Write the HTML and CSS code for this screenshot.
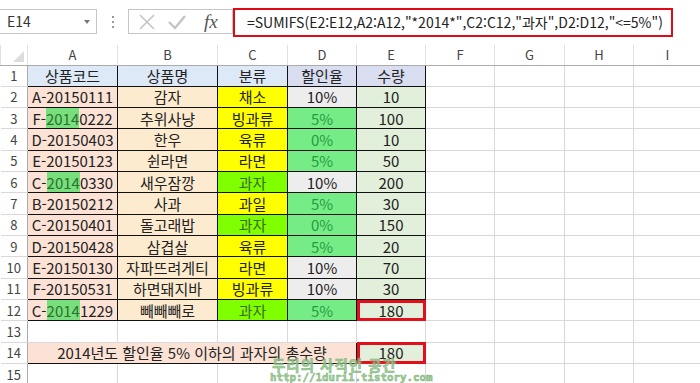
FILE: index.html
```html
<!DOCTYPE html>
<html lang="ko">
<head>
  <meta charset="UTF-8" />
  <title>SUMIFS</title>
  <link rel="stylesheet" href="styles.css">
</head>
<body>
  <div class="topbar">
    <div class="namebox">E14<span class="arrow"></span></div>
    <div class="dots"><span></span><span></span><span></span></div>
    <div class="fxbtns">
      <svg width="18" height="16" viewBox="0 0 18 16"><path d="M2 1 L16 15 M16 1 L2 15" stroke="#c4c4c4" stroke-width="1.6" fill="none"/></svg>
      <svg width="20" height="16" viewBox="0 0 20 16"><path d="M2 8 L8 14 L18 2" stroke="#c4c4c4" stroke-width="2.4" fill="none"/></svg>
      <span class="fx">fx</span>
    </div>
    <div class="formula">=SUMIFS(E2:E12,A2:A12,"*2014*",C2:C12,"과자",D2:D12,"&lt;=5%")</div>
  </div>

  <table class="sheet">
    <colgroup>
      <col style="width:27px"><col style="width:90px"><col style="width:100px"><col style="width:70px">
      <col style="width:69px"><col style="width:69px"><col style="width:69px"><col style="width:70px">
      <col style="width:69px"><col style="width:68px">
    </colgroup>
    <tr class="colhead">
      <th class="corner"><span class="tri"></span></th>
      <th>A</th><th>B</th><th>C</th><th>D</th><th>E</th><th>F</th><th>G</th><th>H</th><th>I</th>
    </tr>
    <tr>
      <td class="rn">1</td>
      <td class="d hd">상품코드</td><td class="d hd">상품명</td><td class="d hd">분류</td>
      <td class="d hd2">할인율</td><td class="d hd2">수량</td>
      <td></td><td></td><td></td><td></td>
    </tr>
    <tr>
      <td class="rn">2</td>
      <td class="d code">A-20150111</td><td class="d name">감자</td><td class="d cat">채소</td>
      <td class="d rate">10%</td><td class="d qty">10</td>
      <td></td><td></td><td></td><td></td>
    </tr>
    <tr>
      <td class="rn">3</td>
      <td class="d code">F-<span class="hl">2014</span>0222</td><td class="d name">추위사냥</td><td class="d cat">빙과류</td>
      <td class="d rate-g">5%</td><td class="d qty">100</td>
      <td></td><td></td><td></td><td></td>
    </tr>
    <tr>
      <td class="rn">4</td>
      <td class="d code">D-20150403</td><td class="d name">한우</td><td class="d cat">육류</td>
      <td class="d rate-g">0%</td><td class="d qty">10</td>
      <td></td><td></td><td></td><td></td>
    </tr>
    <tr>
      <td class="rn">5</td>
      <td class="d code">E-20150123</td><td class="d name">쉰라면</td><td class="d cat">라면</td>
      <td class="d rate-g">5%</td><td class="d qty">50</td>
      <td></td><td></td><td></td><td></td>
    </tr>
    <tr>
      <td class="rn">6</td>
      <td class="d code">C-<span class="hl">2014</span>0330</td><td class="d name">새우잠깡</td><td class="d cat-g">과자</td>
      <td class="d rate">10%</td><td class="d qty">200</td>
      <td></td><td></td><td></td><td></td>
    </tr>
    <tr>
      <td class="rn">7</td>
      <td class="d code">B-20150212</td><td class="d name">사과</td><td class="d cat">과일</td>
      <td class="d rate-g">5%</td><td class="d qty">30</td>
      <td></td><td></td><td></td><td></td>
    </tr>
    <tr>
      <td class="rn">8</td>
      <td class="d code">C-20150401</td><td class="d name">돌고래밥</td><td class="d cat-g">과자</td>
      <td class="d rate-g">0%</td><td class="d qty">150</td>
      <td></td><td></td><td></td><td></td>
    </tr>
    <tr>
      <td class="rn">9</td>
      <td class="d code">D-20150428</td><td class="d name">삼겹살</td><td class="d cat">육류</td>
      <td class="d rate-g">5%</td><td class="d qty">20</td>
      <td></td><td></td><td></td><td></td>
    </tr>
    <tr>
      <td class="rn">10</td>
      <td class="d code">E-20150130</td><td class="d name">자파뜨려게티</td><td class="d cat">라면</td>
      <td class="d rate">10%</td><td class="d qty">70</td>
      <td></td><td></td><td></td><td></td>
    </tr>
    <tr>
      <td class="rn">11</td>
      <td class="d code">F-20150531</td><td class="d name">하면돼지바</td><td class="d cat">빙과류</td>
      <td class="d rate">10%</td><td class="d qty">30</td>
      <td></td><td></td><td></td><td></td>
    </tr>
    <tr>
      <td class="rn">12</td>
      <td class="d code">C-<span class="hl">2014</span>1229</td><td class="d name">빼빼빼로</td><td class="d cat-g">과자</td>
      <td class="d rate-g">5%</td><td class="d qty red">180</td>
      <td></td><td></td><td></td><td></td>
    </tr>
    <tr>
      <td class="rn">13</td>
      <td></td><td></td><td></td><td></td><td></td><td></td><td></td><td></td><td></td>
    </tr>
    <tr>
      <td class="rn">14</td>
      <td class="d total" colspan="4">2014년도 할인율 5% 이하의 과자의 총수량</td>
      <td class="d qty red">180</td>
      <td></td><td></td><td></td><td></td>
    </tr>
    <tr>
      <td class="rn">15</td>
      <td></td><td></td><td></td><td></td><td></td><td></td><td></td><td></td><td></td>
    </tr>
  </table>

  <div class="watermark">
    <div class="wm-title">두리의 사적인 공간</div>
    <div class="wm-url">http://1duri1.tistory.com</div>
  </div>
</body>
</html>
```

FILE: styles.css
```css
body {
  margin: 0;
  background: #fff;
  font-family: "Noto Sans CJK KR", "Noto Sans", sans-serif;
  color: #222;
  position: relative;
  width: 700px;
  height: 383px;
  overflow: hidden;
}
.topbar {
  display: flex;
  align-items: flex-start;
  height: 45px;
  box-sizing: border-box;
  padding-top: 9px;
}
.namebox {
  width: 97px;
  height: 25px;
  box-sizing: border-box;
  border: 1px solid #c6c6c6;
  border-left: none;
  padding-left: 7px;
  font-size: 14px;
  line-height: 23px;
  color: #333;
  position: relative;
}
.arrow {
  position: absolute;
  right: 6px;
  top: 10px;
  border-left: 3px solid transparent;
  border-right: 3px solid transparent;
  border-top: 4px solid #777;
}
.dots {
  width: 31px;
  height: 25px;
  display: flex;
  flex-direction: column;
  align-items: center;
  justify-content: center;
  gap: 3px;
}
.dots span {
  width: 2px;
  height: 2px;
  background: #999;
}
.fxbtns {
  width: 105px;
  height: 25px;
  box-sizing: border-box;
  border: 1px solid #c6c6c6;
  display: flex;
  align-items: center;
  padding-left: 9px;
  gap: 11px;
}
.fx {
  font-family: "Liberation Serif", serif;
  font-style: italic;
  font-size: 19px;
  color: #555;
  line-height: 20px;
  margin-left: 6px;
}
.formula {
  width: 440px;
  height: 29px;
  margin-top: -1px;
  box-sizing: border-box;
  border: 2px solid #de0a16;
  padding-left: 12px;
  font-size: 14px;
  line-height: 25px;
  color: #222;
  white-space: nowrap;
}
.sheet {
  border-collapse: collapse;
  table-layout: fixed;
  width: 701px;
}
.sheet td, .sheet th {
  border: 1px solid #d9d9d9;
  padding: 0;
  text-align: center;
  white-space: nowrap;
  overflow: hidden;
}
.sheet tr {
  height: 21.33px;
}
.colhead {
  height: 20px !important;
}
.colhead th {
  font-weight: normal;
  font-size: 13px;
  color: #444;
  background: #fff;
  border-top: none;
  border-left-color: #e1e1e1;
  border-right-color: #e1e1e1;
  border-bottom: 1px solid #ababab;
}
.corner {
  position: relative;
}
.tri {
  position: absolute;
  right: 3px;
  bottom: 3px;
  border-left: 11px solid transparent;
  border-bottom: 11px solid #dcdcdc;
}
.rn {
  font-size: 13px;
  color: #444;
  border-left: none !important;
  border-right: 1px solid #ababab !important;
  background: #fff;
}
.d {
  border: 1px solid #111 !important;
  font-size: 15px;
  line-height: 19px;
  color: #222;
}
.hd { background: #dde9f6; }
.hd2 { background: #d9ddf0; }
.code { background: #fbe2d5; }
.name { background: #fdebd0; }
.cat { background: #ffff00; }
.cat-g { background: #80ff00; color: #3b6d14; }
.rate { background: #ededed; }
.rate-g { background: #75ec86; color: #2a9a40; }
.qty { background: #e2efda; }
.hl {
  background: #77e07c;
  color: #2f6f2f;
}
.total {
  background: #fbe2d5;
  text-align: center;
}
.red {
  outline: 3px solid #e3101b;
  outline-offset: -3px;
}
.watermark {
  position: absolute;
  left: 270px;
  top: 358px;
  color: #8fc98a;
  font-weight: bold;
  opacity: 0.85;
  -webkit-text-stroke: 0.5px #6aa565;
  text-shadow: 0 0 2px #fff;
}
.wm-title {
  font-size: 14.5px;
  line-height: 14px;
  letter-spacing: 1px;
  padding-left: 2px;
}
.wm-url {
  font-family: "DejaVu Sans Mono", monospace;
  font-size: 10.8px;
  line-height: 12px;
}
```
